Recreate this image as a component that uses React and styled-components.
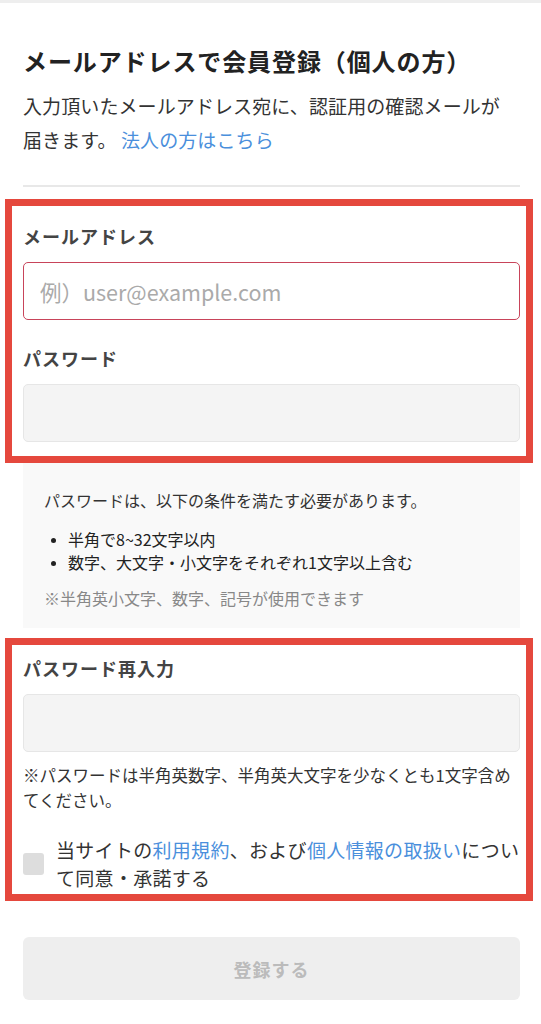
import styled, { createGlobalStyle } from 'styled-components'

const GlobalStyle = createGlobalStyle`
    * {
        box-sizing: border-box;
    }
    body {
        margin: 0;
        background: #fff;
        font-family: "Noto Sans CJK JP", "Noto Sans", sans-serif;
        color: #333;
    }
`

export default function App() {
    return (
        <>
            <GlobalStyle />
            <Page>
                <Title>メールアドレスで会員登録（個人の方）</Title>
                <Lead>
                    入力頂いたメールアドレス宛に、認証用の確認メールが届きます。
                    <Link href="#"> 法人の方はこちら</Link>
                </Lead>
                <Divider />

                <Highlight $top={16} $bottom={14}>
                    <Label>メールアドレス</Label>
                    <Input type="email" placeholder="例）user@example.com" $focused />
                    <Label $gap={24}>パスワード</Label>
                    <Input type="password" />
                </Highlight>

                <Rules>
                    <RulesText>パスワードは、以下の条件を満たす必要があります。</RulesText>
                    <RuleList>
                        <li>半角で8~32文字以内</li>
                        <li>数字、大文字・小文字をそれぞれ1文字以上含む</li>
                    </RuleList>
                    <RulesNote>※半角英小文字、数字、記号が使用できます</RulesNote>
                </Rules>

                <Highlight $top={9} $bottom={2} $spaced>
                    <Label>パスワード再入力</Label>
                    <Input type="password" />
                    <Hint>※パスワードは半角英数字、半角英大文字を少なくとも1文字含めてください。</Hint>
                    <Agree>
                        <CheckBox type="checkbox" />
                        <AgreeText>
                            当サイトの<Link href="#">利用規約</Link>、および<Link href="#">個人情報の取扱い</Link>について同意・承諾する
                        </AgreeText>
                    </Agree>
                </Highlight>

                <Submit disabled>登録する</Submit>
            </Page>
        </>
    )
}

const Page = styled.div`
    border-top: 3px solid #eeeeee;
    padding: 0 21px 0 23px;
    min-height: 1024px;
`
const Title = styled.h1`
    margin: 41px 0 0;
    font-size: 24px;
    line-height: 34px;
    font-weight: 700;
    color: #222;
    letter-spacing: 0.9px;
`
const Lead = styled.p`
    max-width: 490px;
    margin: 11px 0 0;
    font-size: 19px;
    line-height: 34px;
    color: #333;
    letter-spacing: 0.1px;
`
const Link = styled.a`
    color: #4a8fdc;
    text-decoration: none;
`
const Divider = styled.hr`
    margin: 28px 0 0;
    border: none;
    height: 2px;
    background: #e8e8e8;
`
const Highlight = styled.section`
    margin: ${p => (p.$spaced ? '10px' : '12px')} -13px 0 -18px;
    padding: ${p => p.$top}px 6px ${p => p.$bottom}px 11px;
    border: 7px solid #e5483d;
`
const Label = styled.div`
    margin-top: ${p => p.$gap || 0}px;
    font-size: 18px;
    line-height: 28px;
    font-weight: 700;
    color: #444;
    letter-spacing: 1px;
`
const Input = styled.input`
    display: block;
    width: 100%;
    height: 58px;
    margin-top: 12px;
    padding: 0 16px;
    border-radius: 5px;
    border: 1px solid ${p => (p.$focused ? '#c8445a' : '#e6e6e6')};
    background: ${p => (p.$focused ? '#fff' : '#f4f4f4')};
    font-family: inherit;
    font-size: 21.5px;
    color: #333;
    outline: none;

    &::placeholder {
        color: #aaa;
    }
`
const Rules = styled.div`
    background: #f9f9f9;
    padding: 25px 21px 18px;
`
const RulesText = styled.p`
    margin: 0;
    font-size: 16px;
    line-height: 24px;
    color: #333;
`
const RuleList = styled.ul`
    margin: 16px 0 0;
    padding-left: 24px;
    font-size: 16px;
    line-height: 23px;
    color: #222;

    li::marker {
        font-size: 13px;
    }
`
const RulesNote = styled.p`
    margin: 12px 0 0;
    font-size: 16px;
    line-height: 24px;
    color: #888;
`
const Hint = styled.p`
    margin: 11px 0 0;
    font-size: 16.5px;
    line-height: 25px;
    color: #333;
`
const Agree = styled.label`
    display: flex;
    align-items: center;
    gap: 12px;
    margin-top: 23px;
`
const CheckBox = styled.input`
    appearance: none;
    flex: none;
    width: 21px;
    height: 22px;
    margin: 0;
    border-radius: 3px;
    background: #dddddd;
`
const AgreeText = styled.span`
    font-size: 19px;
    line-height: 28px;
    color: #333;
    letter-spacing: 0.3px;
`
const Submit = styled.button`
    display: block;
    width: 100%;
    height: 63px;
    margin-top: 36px;
    border: none;
    border-radius: 6px;
    background: #eeeeee;
    color: #bbbbbb;
    font-family: inherit;
    font-size: 18px;
    font-weight: 700;
    letter-spacing: 1px;
`
